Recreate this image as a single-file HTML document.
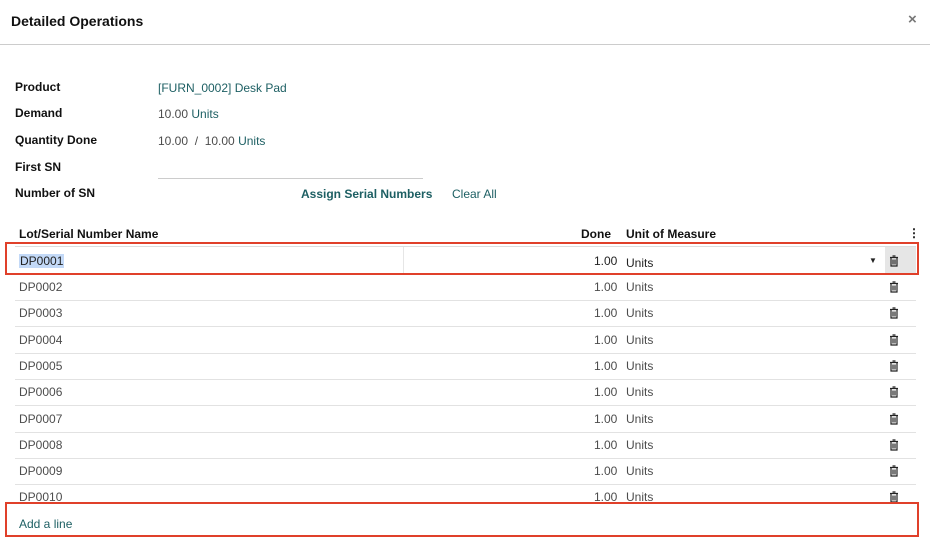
<!DOCTYPE html><html><head><style>
body{margin:0;width:930px;height:546px;overflow:hidden;background:#fff;font-family:"Liberation Sans",sans-serif;font-size:12px;color:#222;position:relative}
.a{position:absolute;white-space:nowrap}
.b{font-weight:bold;color:#111}
.t{color:#1d5f63}
.g{color:#4c4c4c}
.row{position:absolute;left:15px;width:901px;height:26px;border-bottom:1px solid #e2e2e2}
.row span{position:absolute;top:6px}
.tr{position:absolute;top:7px}
</style></head><body>
<div class="a b" style="left:11px;top:13px;font-size:14px">Detailed Operations</div>
<div class="a" style="left:908px;top:11px;font-size:15px;color:#777;font-weight:bold">×</div>
<div class="a" style="left:0;top:44px;width:930px;border-top:1px solid #ccc"></div>
<div class="a b" style="left:15px;top:80px">Product</div>
<div class="a t" style="left:158px;top:81px">[FURN_0002] Desk Pad</div>
<div class="a b" style="left:15px;top:106px">Demand</div>
<div class="a g" style="left:158px;top:107px">10.00 <span class="t">Units</span></div>
<div class="a b" style="left:15px;top:133px">Quantity Done</div>
<div class="a g" style="left:158px;top:134px">10.00 &nbsp;/ &nbsp;10.00 <span class="t">Units</span></div>
<div class="a b" style="left:15px;top:160px">First SN</div>
<div class="a" style="left:158px;top:178px;width:265px;border-top:1px solid #ccc"></div>
<div class="a b" style="left:15px;top:186px">Number of SN</div>
<div class="a t" style="left:301px;top:187px;font-weight:bold">Assign Serial Numbers</div>
<div class="a t" style="left:452px;top:187px">Clear All</div>
<div class="a b" style="left:19px;top:227px">Lot/Serial Number Name</div>
<div class="a b" style="left:581px;top:227px">Done</div>
<div class="a b" style="left:626px;top:227px">Unit of Measure</div>
<div class="a b" style="left:908px;top:226px">⋮</div>
<div class="a" style="left:15px;top:246px;width:901px;border-top:1px solid #ddd"></div>
<div class="a" style="left:403px;top:247px;height:26px;border-left:1px solid #e6e6e6"></div>
<div class="a" style="left:885px;top:247px;width:31px;height:27px;background:#e6e6e6"></div>
<div class="a" style="left:19px;top:254px;background:#c3d9f7;padding:0 1px">DP0001</div>
<div class="a" style="left:594px;top:254px">1.00</div>
<div class="a" style="left:623px;top:249px;width:262px;height:25px;border-bottom:1px solid #333"></div>
<div class="a" style="left:626px;top:256px">Units</div>
<div class="a" style="left:869px;top:256px;font-size:8px">▼</div>
<svg class="a" style="left:889px;top:255px" width="10" height="12"><path d="M1 2.5h8M3.5 1h3M2 3v8h6V3M4 4.5v5M6 4.5v5" stroke="#222" fill="none" stroke-width="1.2"/></svg>
<div class="a" style="left:5px;top:242px;width:910px;height:29px;border:2px solid #e0402a"></div>
<div id="rows"></div>
<div class="a" style="left:5px;top:502px;width:910px;height:31px;border:2px solid #e0402a;background:#fff"></div>
<div class="a t" style="left:19px;top:517px">Add a line</div>
<script>
var h='';for(var i=2;i<=10;i++){var y=274+(i-2)*26.3;
h+='<div class="row" style="top:'+y+'px"><span class="g" style="left:4px">DP'+('000'+i).slice(-4)+'</span><span class="g" style="left:579px">1.00</span><span class="g" style="left:611px">Units</span><svg class="tr" width="10" height="12" style="left:874px"><path d="M1 2.5h8M3.5 1h3M2 3v8h6V3M4 4.5v5M6 4.5v5" stroke="#222" fill="none" stroke-width="1.2"/></svg></div>';}
document.getElementById('rows').outerHTML=h;
</script>
</body></html>
